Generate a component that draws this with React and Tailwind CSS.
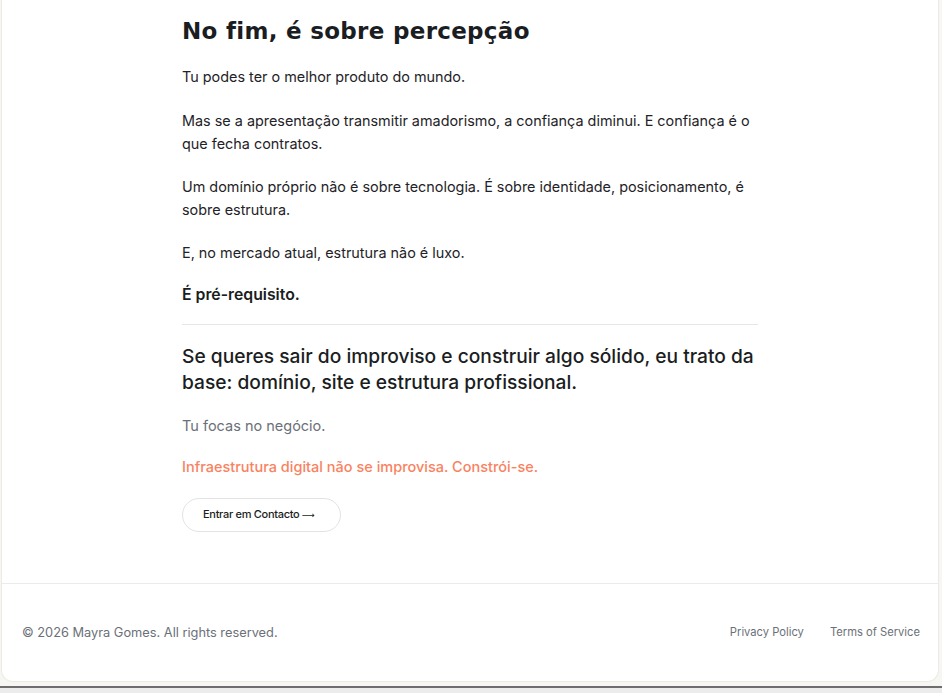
export default function App() {
  const body = "text-[14.4px] leading-[23px] text-[#1f2328]";
  return (
    <div className="min-h-screen bg-[#f7f6f2] flex flex-col" style={{ fontFamily: "Inter, 'Noto Sans', sans-serif" }}>
      <div className="ml-[1px] w-[938px] h-[682px] bg-white border-x border-b border-[#ebeae5] rounded-b-[12px] flex flex-col">
        <main className="flex-1 flex justify-center">
          <div className="w-[576px] pt-[15px]">
            <h1 className="text-[23px] leading-[32px] font-bold text-[#1a1d21] tracking-[0.3px]" style={{ fontFamily: "'DejaVu Sans', sans-serif" }}>
              No fim, é sobre percepção
            </h1>
            <div className="mt-[18px] flex flex-col">
              <p className={body}>Tu podes ter o melhor produto do mundo.</p>
              <p className={`${body} mt-[20.5px]`}>Mas se a apresentação transmitir amadorismo, a confiança diminui. E confiança é o que fecha contratos.</p>
              <p className={`${body} mt-[20px]`}>Um domínio próprio não é sobre tecnologia. É sobre identidade, posicionamento, é sobre estrutura.</p>
              <p className={`${body} mt-[20px]`}>E, no mercado atual, estrutura não é luxo.</p>
              <p className="mt-[19px] text-[15.8px] leading-[23px] font-semibold text-[#1a1d21]">É pré-requisito.</p>
            </div>
            <div className="mt-[18px] border-t border-[#e6e6e6]"></div>
            <h2 className="mt-[18px] text-[19.2px] leading-[26px] font-medium text-[#1a1d21]">
              Se queres sair do improviso e construir algo sólido, eu trato da base: domínio, site e estrutura profissional.
            </h2>
            <p className="mt-[19px] text-[14.5px] leading-[23px] text-[#6b7078]">Tu focas no negócio.</p>
            <p className="mt-[18px] text-[14.5px] leading-[23px] font-medium text-[#f9825f]">Infraestrutura digital não se improvisa. Constrói-se.</p>
            <button className="mt-[20px] h-[34px] w-[159px] pl-[20px] text-left rounded-full border border-[#e3e3e3] bg-white text-[11px] tracking-[-0.3px] font-medium text-[#1a1d21]">
              Entrar em Contacto <span style={{ fontFamily: "'DejaVu Sans', sans-serif" }} className="text-[9px]">⟶</span>
            </button>
          </div>
        </main>
        <footer className="h-[98px] border-t border-[#ebebeb] flex items-center justify-between pl-[20px] pr-[18px]">
          <span className="text-[12.8px] text-[#6b7078]">© 2026 Mayra Gomes. All rights reserved.</span>
          <div className="flex gap-[26px] text-[11.2px] text-[#6b7078]">
            <span>Privacy Policy</span>
            <span>Terms of Service</span>
          </div>
        </footer>
      </div>
      <div className="h-[4px]"></div>
      <div className="h-[2px] bg-[#6e6e6e]"></div>
      <div className="flex-1 bg-[#ececec]"></div>
    </div>
  );
}
